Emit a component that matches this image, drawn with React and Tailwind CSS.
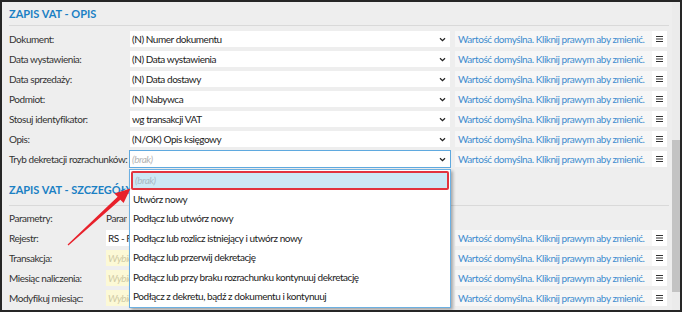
import React from 'react';

const font = { fontFamily: 'Lato, "Noto Sans", sans-serif' };

const DEFAULT = 'Wartość domyślna. Kliknij prawym aby zmienić.';

function Chevron() {
  return (
    <svg width="7" height="5" viewBox="0 0 7 5" className="shrink-0">
      <path d="M1 1.2 L3.5 3.6 L6 1.2" fill="none" stroke="#222" strokeWidth="1.3" />
    </svg>
  );
}

function Burger() {
  return (
    <svg width="7" height="6" viewBox="0 0 7 6">
      <path d="M0 0.5 H7 M0 3 H7 M0 5.5 H7" stroke="#333" strokeWidth="1" />
    </svg>
  );
}

function DefaultBox() {
  return (
    <>
      <div className="ml-[5px] w-[197px] h-[16px] bg-[#f6f6f6] text-[#3d8ccf] pl-[3px] leading-[16px] whitespace-nowrap overflow-hidden">
        {DEFAULT}
      </div>
      <div className="w-[15px] h-[16px] bg-white flex items-center justify-center">
        <Burger />
      </div>
    </>
  );
}

function SelectRow({ label, value, placeholder, focused }) {
  return (
    <div className="flex h-[20px] items-start">
      <div className="w-[121px] leading-[16px] text-[#333] whitespace-nowrap">{label}</div>
      <div
        className={`w-[320px] h-[16px] bg-white flex items-center justify-between pl-[2px] pr-[4px] ${
          focused ? 'outline outline-1 outline-[#5fa9df]' : ''
        }`}
      >
        <span className={placeholder ? 'italic text-[#b4b4b4]' : 'text-[#222]'}>{value}</span>
        <Chevron />
      </div>
      <DefaultBox />
    </div>
  );
}

function DetailRow({ label, children, withDefault = true }) {
  return (
    <div className="flex h-[20px] items-start">
      <div className="w-[97px] leading-[16px] text-[#333] whitespace-nowrap">{label}</div>
      <div className="w-[344px] h-[16px]">{children}</div>
      {withDefault && <DefaultBox />}
    </div>
  );
}

// value hidden behind the open list: only its first letters show
function Peek({ children }) {
  return <span className="inline-block max-w-[21px] overflow-hidden whitespace-nowrap align-top">{children}</span>;
}

const options = [
  'Utwórz nowy',
  'Podłącz lub utwórz nowy',
  'Podłącz lub rozlicz istniejący i utwórz nowy',
  'Podłącz lub przerwij dekretację',
  'Podłącz lub przy braku rozrachunku kontynuuj dekretację',
  'Podłącz z dekretu, bądź z dokumentu i kontynuuj',
];

export default function App() {
  return (
    <div
      style={font}
      className="relative w-[682px] h-[312px] border-2 border-[#262626] bg-[#eeeeee] text-[10px] tracking-[-0.45px] flex overflow-hidden"
    >
      <div className="flex-1 pl-[7px] pr-[3px]">
        {/* Opis */}
        <div className="h-[24px] pt-[6px] leading-[12px] text-[11px] tracking-normal font-bold text-[#1b80c4] border-b border-[#d9d9d9]">
          ZAPIS VAT - OPIS
        </div>
        <div className="pt-[5px]">
          <SelectRow label="Dokument:" value="(N) Numer dokumentu" />
          <SelectRow label="Data wystawienia:" value="(N) Data wystawienia" />
          <SelectRow label="Data sprzedaży:" value="(N) Data dostawy" />
          <SelectRow label="Podmiot:" value="(N) Nabywca" />
          <SelectRow label="Stosuj identyfikator:" value="wg transakcji VAT" />
          <SelectRow label="Opis:" value="(N/OK) Opis księgowy" />
          <SelectRow label="Tryb dekretacji rozrachunków:" value="(brak)" placeholder focused />
        </div>

        {/* Szczegóły */}
        <div className="h-[35px] pt-[13px] leading-[12px] text-[11px] tracking-normal font-bold text-[#1b80c4] border-b border-[#d9d9d9]">
          ZAPIS VAT - SZCZEGÓŁY
        </div>
        <div className="pt-[4px]">
          <DetailRow label="Parametry:" withDefault={false}>
            <div className="leading-[16px] text-[#333]"><Peek>Parametry</Peek></div>
          </DetailRow>
          <DetailRow label="Rejestr:">
            <div className="h-[16px] bg-white leading-[16px] pl-[2px] text-[#222]"><Peek>RS - Rejestr</Peek></div>
          </DetailRow>
          <DetailRow label="Transakcja:">
            <div className="h-[16px] bg-[#fcf9d6] leading-[16px] pl-[2px] italic text-[#cfc9a4]"><Peek>Wybierz</Peek></div>
          </DetailRow>
          <DetailRow label="Miesiąc naliczenia:">
            <div className="h-[16px] bg-[#fcf9d6] leading-[16px] pl-[2px] italic text-[#cfc9a4]"><Peek>Wybierz</Peek></div>
          </DetailRow>
          <DetailRow label="Modyfikuj miesiąc:">
            <div className="h-[16px] bg-[#fcf9d6] leading-[16px] pl-[2px] italic text-[#cfc9a4]"><Peek>Wybierz</Peek></div>
          </DetailRow>
        </div>
      </div>

      {/* scrollbar */}
      <div className="w-[8px] flex flex-col bg-[#ebebeb]">
        <div className="h-[138px]" />
        <div className="h-[152px] bg-[#c3c3c3]" />
      </div>

      {/* dropdown list */}
      <div className="absolute left-[127px] top-[167px] w-[322px] h-[139px] bg-white border border-[#6cb0e2] shadow-[2px_2px_3px_rgba(0,0,0,0.3)] pt-[1px]">
        <div className="h-[19px] mx-[1px] bg-[#cde8f5] border-2 border-[#e2343e] rounded-[2px] leading-[15px] pl-[2px] italic text-[#a8b8c4]">
          (brak)
        </div>
        {options.map(o => (
          <div key={o} className="h-[19.4px] leading-[19.4px] pl-[3px] text-[#222] whitespace-nowrap">
            {o}
          </div>
        ))}
      </div>

      {/* red arrow */}
      <svg className="absolute left-0 top-0 pointer-events-none" width="682" height="312">
        <polygon
          points="65.6,242.6 115.65,194.73 112.4,191.4 128.5,186.5 121.6,201 118.35,197.67 66.4,243.4"
          fill="#e8212b"
        />
      </svg>
    </div>
  );
}
